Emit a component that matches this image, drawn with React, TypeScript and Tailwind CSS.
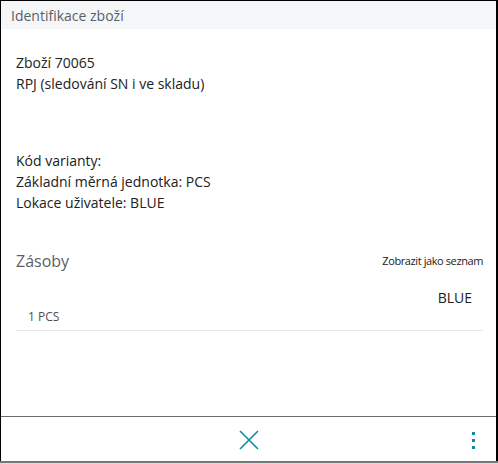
export default function App() {
  const font = { fontFamily: '"Segoe UI", "Open Sans", "Noto Sans", sans-serif' };
  return (
    <div className="w-[498px] h-[464px] flex flex-col bg-white overflow-hidden" style={font}>
      <div className="flex-1 flex flex-col border-l border-r-2 border-t border-black">
        {/* Záhlaví */}
        <div className="h-[28px] bg-[#f5f6f8] flex items-center pl-[10px] text-[14px] text-[#5a5f66]">
          Identifikace zboží
        </div>

        {/* Info o zboží */}
        <div className="px-[15px] pt-[23px] text-[14px] leading-[21px] text-[#212121]">
          <p>Zboží 70065</p>
          <p>RPJ (sledování SN i ve skladu)</p>
          <div className="h-[56px]" />
          <p>Kód varianty:</p>
          <p>Základní měrná jednotka: PCS</p>
          <p>Lokace uživatele: BLUE</p>
        </div>

        {/* Zásoby */}
        <div className="pl-[15px] pr-[13px] mt-[36px]">
          <div className="flex items-center justify-between">
            <span className="text-[16px] text-[#5a5f66]">Zásoby</span>
            <span className="text-[11px] tracking-[-0.4px] text-[#212121]">Zobrazit jako seznam</span>
          </div>
          <div className="border-b border-[#e6e6e6] pb-[4px]">
            <div className="flex justify-end pr-[11px] mt-[15px] text-[14px] leading-[20px] text-[#212121]">
              BLUE
            </div>
            <div className="pl-[12px] text-[12px] leading-[18px] text-[#505050]">1 PCS</div>
          </div>
        </div>

        <div className="flex-1" />

        {/* Patička */}
        <div className="h-[45px] border-t border-[#6b6b6b] flex items-center relative">
          <div className="flex-1 flex justify-center">
            <svg width="22" height="22" viewBox="0 0 22 22" className="mt-[1px]">
              <path d="M2 2 L20 20 M20 2 L2 20" stroke="#0f8aa0" strokeWidth="1.6" />
            </svg>
          </div>
          <div className="absolute right-[21px] top-[15px] flex flex-col gap-[4px]">
            <span className="w-[3px] h-[3px] bg-[#0f8aa0]" />
            <span className="w-[3px] h-[3px] bg-[#0f8aa0]" />
            <span className="w-[3px] h-[3px] bg-[#0f8aa0]" />
          </div>
        </div>
      </div>
      <div className="h-[3px] border-t-2 border-[#777] bg-[#ddd]" />
    </div>
  );
}
